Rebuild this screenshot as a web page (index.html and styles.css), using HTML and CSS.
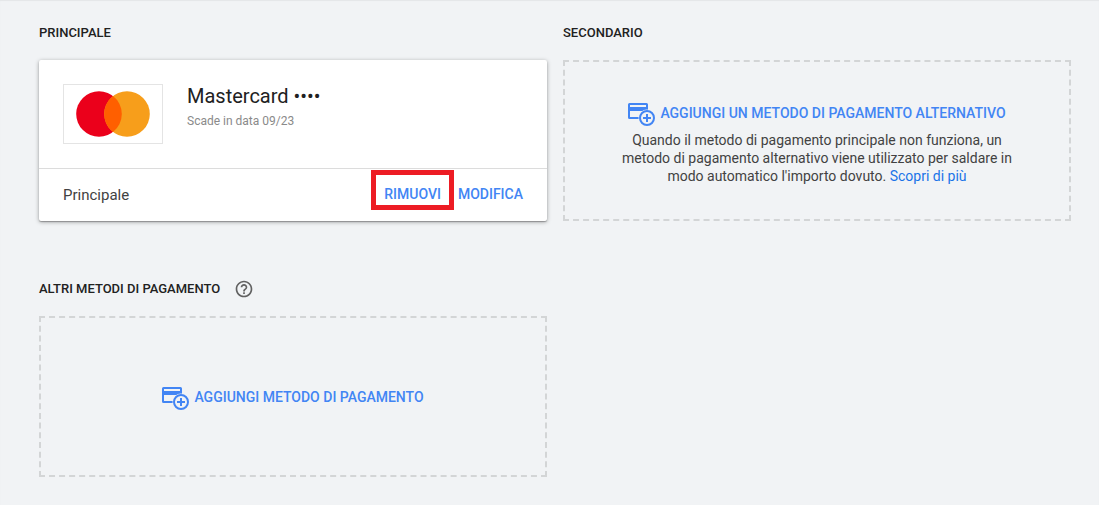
FILE: index.html
```html
<!DOCTYPE html>
<html lang="it">
<head>
<meta charset="utf-8">
<title>Metodi di pagamento</title>
<link rel="stylesheet" href="styles.css">
</head>
<body>
<svg class="symbols" aria-hidden="true">
  <symbol id="add-card" viewBox="0 0 27 23">
    <path fill="currentColor" d="M1.500 0h17a1.500 1.500 0 0 1 1.500 1.500V8h-8v0H2v6h9v2H1.500A1.500 1.500 0 0 1 0 14.500v-13A1.500 1.500 0 0 1 1.500 0zM2 2v2h16V2z"/>
    <circle class="badge-fill" cx="19" cy="15" r="8.500"/>
    <circle cx="19" cy="15" r="7" fill="none" stroke="currentColor" stroke-width="2"/>
    <path fill="currentColor" d="M18 11h2v3h3v2h-3v3h-2v-3h-3v-2h3z"/>
  </symbol>
</svg>
<main class="page">
  <section>
    <h2 class="heading">PRINCIPALE</h2>
    <article class="card">
      <div class="card-info">
        <div class="brand">
          <svg width="74" height="46" viewBox="0 0 74 46" role="img" aria-label="Mastercard">
            <circle cx="23" cy="23" r="22.800" fill="#eb001b"/>
            <circle cx="51" cy="23" r="22.800" fill="#f79e1b"/>
            <path fill="#ff5f00" d="M37 5a22.800 22.800 0 0 1 0 36a22.800 22.800 0 0 1 0-36z"/>
          </svg>
        </div>
        <div>
          <h3 class="card-name">Mastercard ••••</h3>
          <p class="expiry">Scade in data 09/23</p>
        </div>
      </div>
      <div class="card-footer">
        <span class="role">Principale</span>
        <div class="actions">
          <button class="action marked" type="button">RIMUOVI</button>
          <button class="action" type="button">MODIFICA</button>
        </div>
      </div>
    </article>
  </section>
  <section>
    <h2 class="heading">SECONDARIO</h2>
    <div class="slot slot-noted">
      <button class="action add" type="button"><svg class="add-icon" aria-hidden="true"><use href="#add-card"/></svg>AGGIUNGI UN METODO DI PAGAMENTO ALTERNATIVO</button>
      <p class="note">Quando il metodo di pagamento principale non funziona, un metodo di pagamento alternativo viene utilizzato per saldare in modo automatico l'importo dovuto. <a class="more" href="#">Scopri di più</a></p>
    </div>
  </section>
  <section>
    <h2 class="heading">ALTRI METODI DI PAGAMENTO
      <svg class="help" viewBox="0 0 24 24" role="img" aria-label="Guida"><path fill="currentColor" d="M11 18h2v-2h-2v2zm1-16C6.480 2 2 6.480 2 12s4.480 10 10 10 10-4.480 10-10S17.520 2 12 2zm0 18c-4.410 0-8-3.590-8-8s3.590-8 8-8 8 3.590 8 8-3.590 8-8 8zm0-14c-2.210 0-4 1.790-4 4h2c0-1.100.9-2 2-2s2 .9 2 2c0 2-3 1.750-3 5h2c0-2.250 3-2.500 3-5 0-2.210-1.790-4-4-4z"/></svg>
    </h2>
    <div class="slot">
      <button class="action add" type="button"><svg class="add-icon" aria-hidden="true"><use href="#add-card"/></svg>AGGIUNGI METODO DI PAGAMENTO</button>
    </div>
  </section>
</main>
</body>
</html>
```
FILE: styles.css
```css
* {
  box-sizing: border-box;
}

body {
  margin: 0;
  background: #f1f3f5;
  color: #212121;
  font-family: Roboto, "Liberation Sans", sans-serif;
  box-shadow: inset 0 1px 1px #e4e6e8;
}

h2, h3, p {
  margin: 0;
}

.symbols {
  display: block;
  width: 0;
  height: 0;
}

.page {
  display: grid;
  grid-template-columns: 1fr 1fr;
  gap: 55px 16px;
  padding: 20px 28px 28px 39px;
}

.heading {
  display: flex;
  align-items: center;
  gap: 14px;
  height: 25px;
  margin-bottom: 15px;
  font-size: 13px;
  font-weight: 500;
}

.help {
  width: 20px;
  height: 20px;
  color: #616161;
}

.card {
  background: #fff;
  border-radius: 2px;
  box-shadow: 0 1px 4px rgba(0, 0, 0, 0.35), 0 1px 1px rgba(0, 0, 0, 0.25);
}

.card-info {
  display: flex;
  gap: 24px;
  padding: 24px;
}

.brand {
  display: flex;
  align-items: center;
  justify-content: center;
  width: 100px;
  height: 60px;
  border: 1px solid #e4e4e4;
}

.card-name {
  font-size: 20px;
  font-weight: 400;
  line-height: 24px;
}

.expiry {
  margin-top: 4px;
  color: #8a8a8a;
  font-size: 12px;
  line-height: 18px;
}

.card-footer {
  display: flex;
  align-items: center;
  justify-content: space-between;
  height: 53px;
  padding: 0 24px;
  border-top: 1px solid #dcdcdc;
}

.role {
  color: #424242;
  font-size: 15px;
}

.actions {
  display: flex;
  align-items: baseline;
  gap: 4px;
  margin-bottom: 10px;
}

.action {
  padding: 0;
  border: 0;
  background: none;
  color: #4285f4;
  font-family: inherit;
  font-size: 14px;
  font-weight: 500;
  line-height: 18px;
  cursor: pointer;
}

.marked {
  height: 40px;
  padding: 8px 8px 0;
  border: 5px solid #ed1c24;
}

.slot {
  display: flex;
  flex-direction: column;
  align-items: center;
  justify-content: center;
  min-height: 161px;
  padding: 0 50px;
  border: 2px dashed #d3d5d6;
}

.slot-noted {
  padding-top: 4px;
}

.add {
  display: flex;
  align-items: center;
  gap: 5px;
}

.add-icon {
  width: 27px;
  height: 23px;
  margin-top: 3px;
}

.badge-fill {
  fill: #f1f3f5;
}

.note {
  margin-top: 5px;
  color: #424242;
  font-size: 14px;
  line-height: 18px;
  text-align: center;
}

.more {
  color: #1a73e8;
  text-decoration: none;
}
```
